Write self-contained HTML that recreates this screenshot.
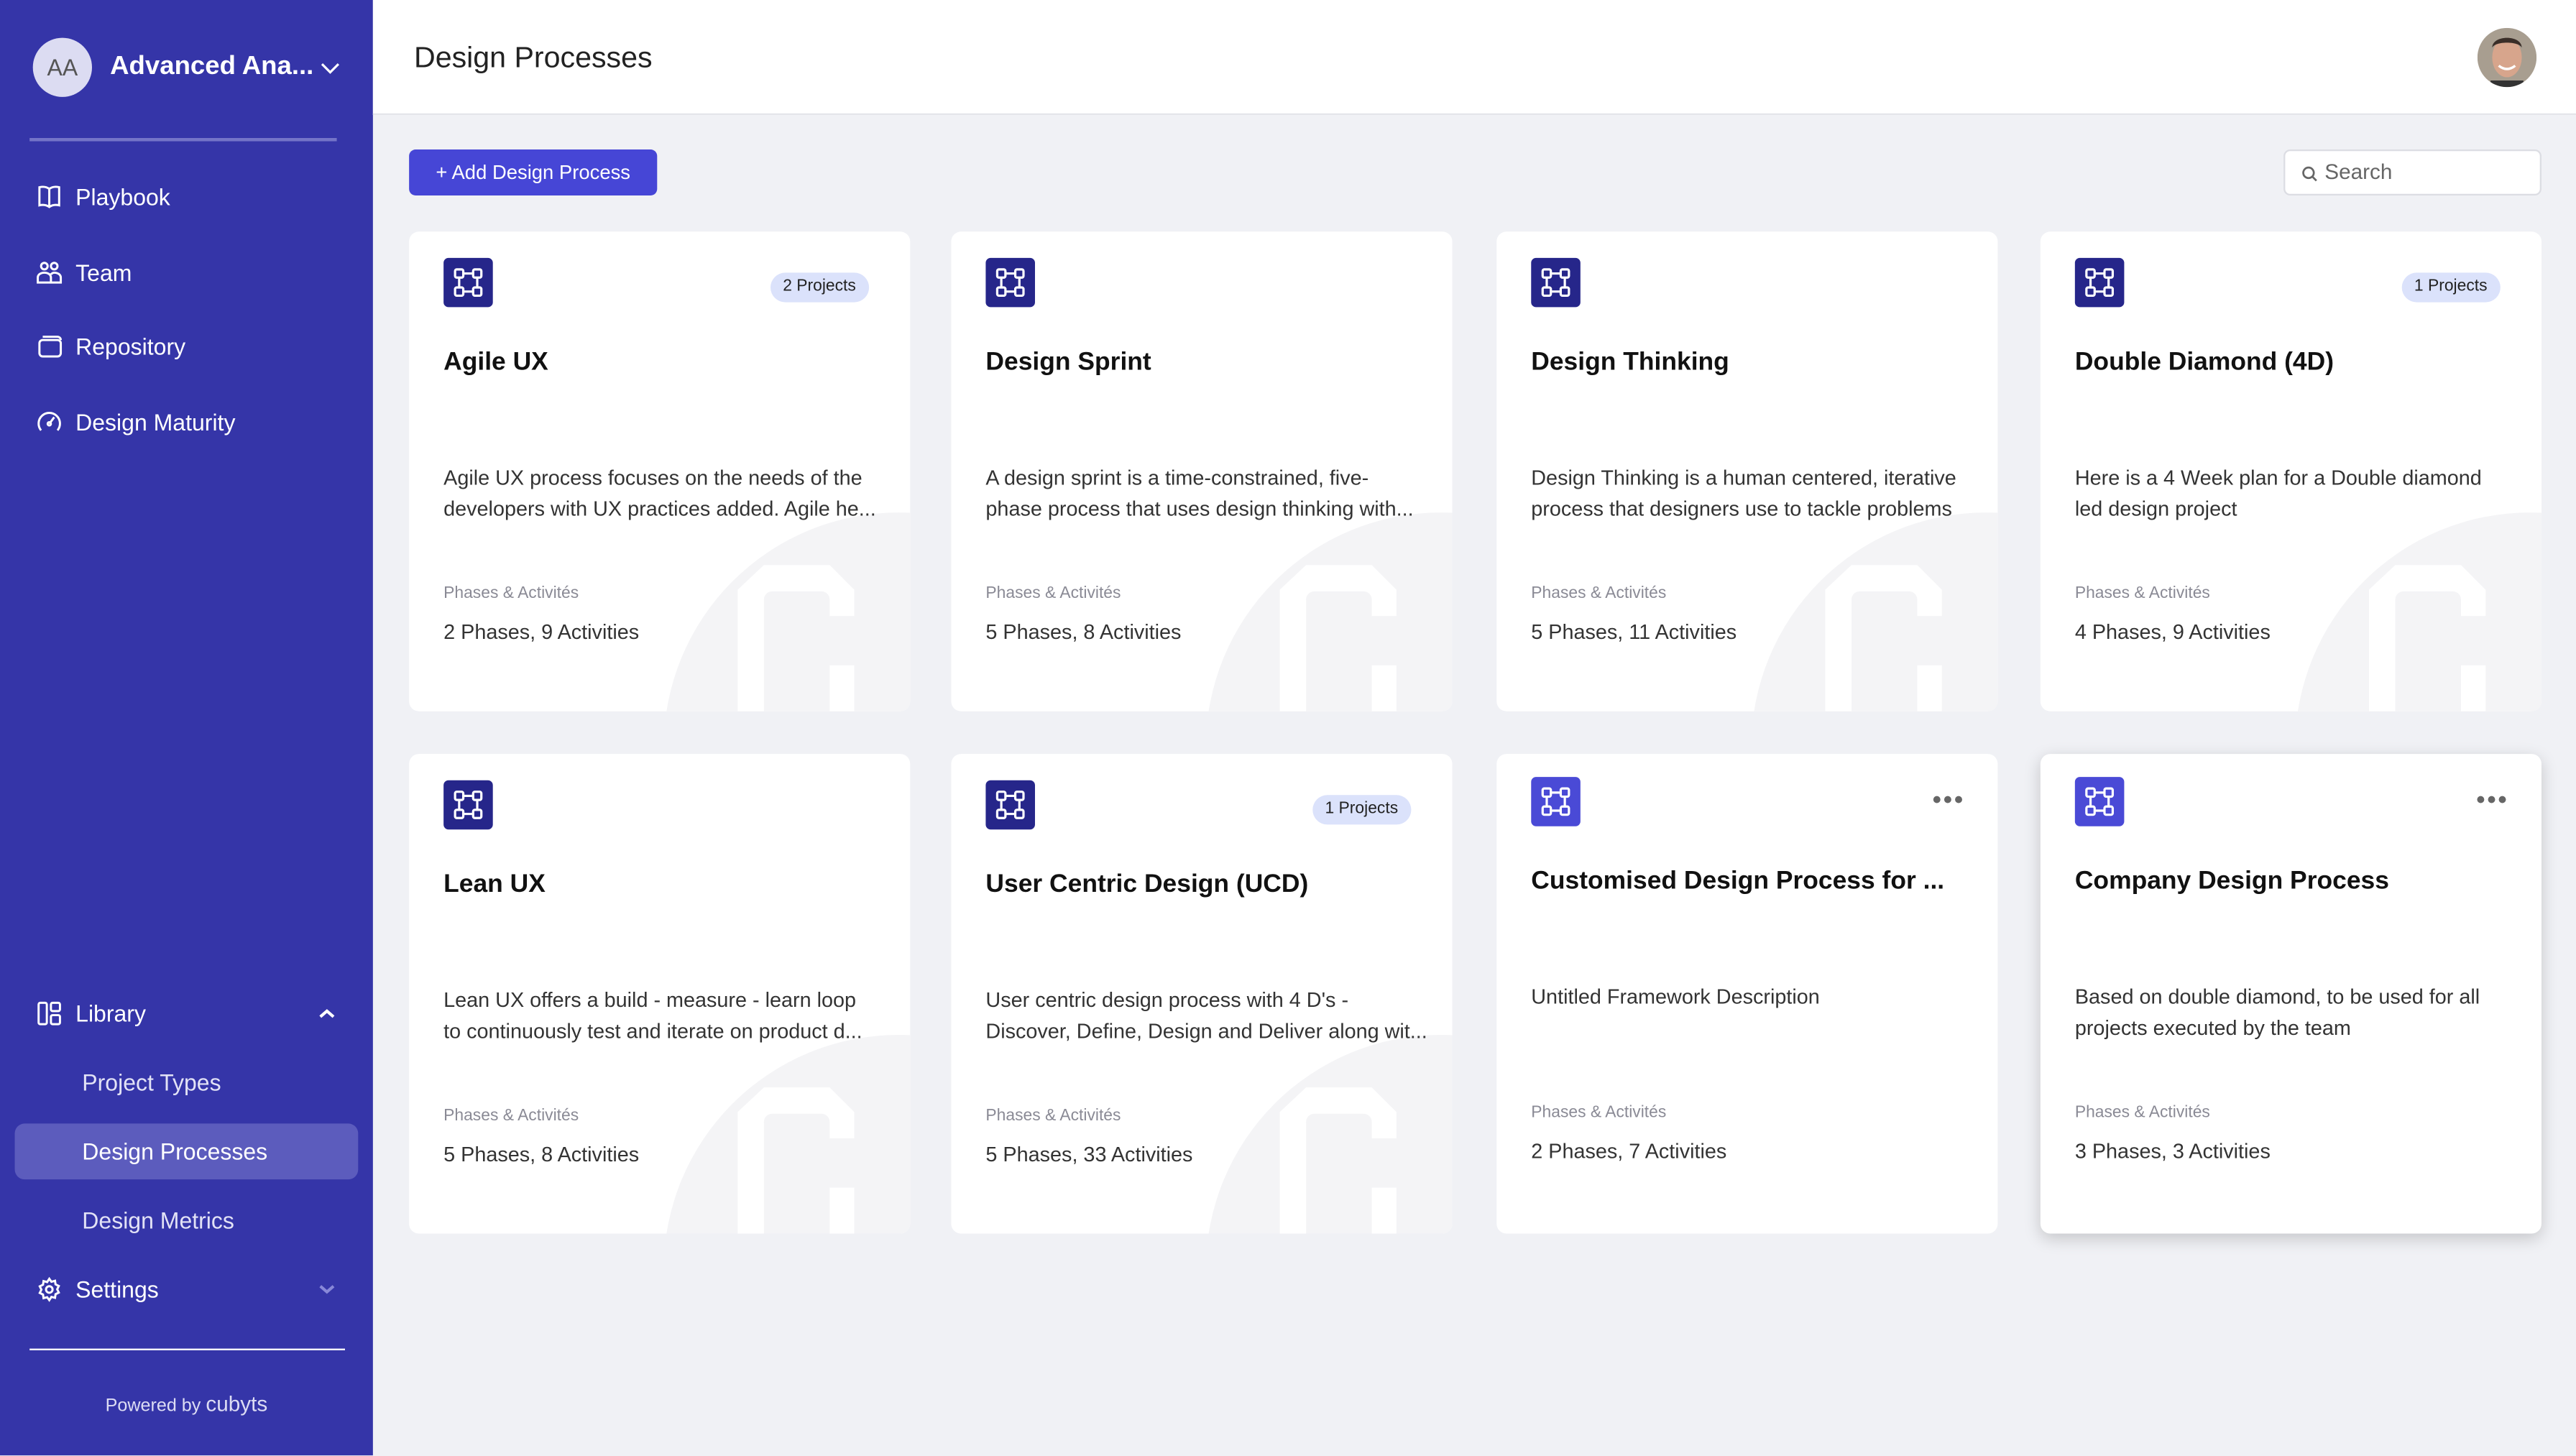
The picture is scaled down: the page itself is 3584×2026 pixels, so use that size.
<!DOCTYPE html>
<html><head><meta charset="utf-8"><style>
*{box-sizing:border-box;margin:0;padding:0}
html,body{width:3584px;height:2026px;overflow:hidden;background:#f0f1f5}
#w{width:1568px;height:886px;transform:scale(2.2857);transform-origin:0 0;position:relative;font-family:"Liberation Sans",sans-serif;background:#f0f1f5}
.sb{position:absolute;left:0;top:0;width:227px;height:886px;background:#3535a8;color:#fff}
.ab{position:absolute}
.nav{position:absolute;left:22px;font-size:14px;display:flex;align-items:center;gap:8px;color:#fff}
.nav svg{width:16px;height:16px}
.sub{position:absolute;left:50px;font-size:14px;color:#e2e2f6}
.hd{position:absolute;left:227px;top:0;right:0;height:70px;background:#fff;border-bottom:1px solid #e4e5ea}
.card{position:absolute;width:305px;height:292px;background:#fff;border-radius:6px;overflow:hidden}
.card .ic{position:absolute;left:21px;top:16px;width:30px;height:30px;border-radius:3px;background:#26268a}
.card .ic svg{position:absolute;left:5px;top:5px}
.card .bd{position:absolute;right:25px;top:25px;height:18px;padding:0 8px;border-radius:9px;background:#dbe2fb;font-size:10px;line-height:18px;color:#222}
.card h3{position:absolute;left:21px;top:71px;font-size:15.5px;font-weight:bold;color:#111;white-space:nowrap}
.card .ds{position:absolute;left:21px;top:141px;font-size:12.6px;line-height:19px;color:#333;white-space:nowrap}
.card .pl{position:absolute;left:21px;top:215px;font-size:10px;color:#8a8a95}
.card .pv{position:absolute;left:21px;top:237px;font-size:12.6px;color:#333}
.card .wm{position:absolute;left:0;top:0}
.dots{position:absolute;right:20px;top:20px;font-size:16px;color:#666;letter-spacing:1px}
</style></head><body><div id="w">
<div class="sb">
 <div class="ab" style="left:20px;top:23px;width:36px;height:36px;border-radius:50%;background:#dcdcf2;color:#555;font-size:14px;text-align:center;line-height:36px">AA</div>
 <div class="ab" style="left:67px;top:32px;font-size:16px;font-weight:bold">Advanced Ana...</div>
 <svg class="ab" style="left:195px;top:38px" width="12" height="8" viewBox="0 0 12 8"><path d="M1 1l5 5 5-5" stroke="#fff" stroke-width="1.4" fill="none"/></svg>
 <div class="ab" style="left:18px;top:84px;width:187px;height:2px;background:#7474c8"></div>
 <div class="nav" style="top:112px"><svg viewBox="0 0 16 16" fill="none" stroke="#fff" stroke-width="1.3"><path d="M8 3c-2-1.5-4-1.5-6-1v11c2-.5 4-.5 6 1 2-1.5 4-1.5 6-1V2c-2-.5-4-.5-6 1zM8 3v11"/></svg>Playbook</div>
 <div class="nav" style="top:158px"><svg viewBox="0 0 16 16" fill="none" stroke="#fff" stroke-width="1.3"><circle cx="5" cy="4" r="2"/><circle cx="11" cy="4" r="2"/><path d="M1 14v-3c0-2 2-3 4-3s4 1 4 3v3zM9 9c1-1 2-1 2-1 2 0 4 1 4 3v3H9"/></svg>Team</div>
 <div class="nav" style="top:203px"><svg viewBox="0 0 16 16" fill="none" stroke="#fff" stroke-width="1.3"><rect x="2" y="4" width="13" height="10" rx="2"/><path d="M4 2h9a2 2 0 0 1 2 2"/></svg>Repository</div>
 <div class="nav" style="top:249px"><svg viewBox="0 0 16 16" fill="none" stroke="#fff" stroke-width="1.3"><path d="M3 13a6.5 6.5 0 1 1 10 0"/><path d="M8 9l3-4"/><circle cx="8" cy="9" r="1"/></svg>Design Maturity</div>
 <div class="nav" style="top:609px"><svg viewBox="0 0 16 16" fill="none" stroke="#fff" stroke-width="1.3"><rect x="1.5" y="1.5" width="5" height="13" rx="1"/><rect x="9" y="1.5" width="5.5" height="5" rx="1"/><rect x="9" y="9" width="5.5" height="5.5" rx="1"/></svg>Library</div>
 <svg class="ab" style="left:194px;top:614px" width="10" height="7" viewBox="0 0 10 7"><path d="M1 5l4-3.5 4 3.5" stroke="#fff" stroke-width="1.8" fill="none"/></svg>
 <div class="sub" style="top:651px">Project Types</div>
 <div class="ab" style="left:9px;top:684px;width:209px;height:34px;border-radius:6px;background:#5c5cbd"></div>
 <div class="sub" style="top:693px;color:#fff">Design Processes</div>
 <div class="sub" style="top:735px">Design Metrics</div>
 <div class="nav" style="top:777px"><svg viewBox="0 0 16 16" fill="none" stroke="#fff" stroke-width="1.3"><circle cx="8" cy="8" r="2"/><path d="M8 1.5l1.3 1.8 2.2-.6.3 2.2 2 1-1 2 1 2-2 1-.3 2.2-2.2-.6L8 14.5l-1.3-1.8-2.2.6-.3-2.2-2-1 1-2-1-2 2-1 .3-2.2 2.2.6z"/></svg>Settings</div>
 <svg class="ab" style="left:194px;top:781px" width="10" height="7" viewBox="0 0 10 7"><path d="M1 2l4 3.5 4-3.5" stroke="#8888d8" stroke-width="1.8" fill="none"/></svg>
 <div class="ab" style="left:18px;top:821px;width:192px;height:1px;background:#fff"></div>
 <div class="ab" style="left:0;width:227px;top:847px;text-align:center;font-size:11px;color:#dcdcf4">Powered by <span style="font-size:13px">cubyts</span></div>
</div>
<div class="hd">
 <div class="ab" style="left:25px;top:25px;font-size:18px;color:#222">Design Processes</div>
 <svg class="ab" style="left:1281px;top:17px" width="36" height="36" viewBox="0 0 36 36"><defs><clipPath id="cp"><circle cx="18" cy="18" r="18"/></clipPath></defs><g clip-path="url(#cp)"><rect width="36" height="36" fill="#a89e90"/><ellipse cx="18" cy="18" rx="9" ry="12" fill="#d7a58c"/><path d="M9 12c0-8 18-8 18 0-2-4-16-4-18 0z" fill="#3a2e28"/><path d="M13 23q5 4 10 0" stroke="#fff" stroke-width="1.5" fill="none"/><rect x="8" y="32" width="20" height="6" fill="#333"/></g></svg>
</div>
<div class="ab" style="left:249px;top:91px;width:151px;height:28px;border-radius:4px;background:#4646d6;color:#fff;font-size:12px;line-height:28px;text-align:center">+ Add Design Process</div>
<div class="ab" style="left:1390px;top:91px;width:157px;height:28px;border-radius:4px;background:#fff;border:1px solid #dcdde3;font-size:13px;line-height:26px;color:#666;padding-left:24px">Search
<svg class="ab" style="left:10px;top:9px" width="10" height="10" viewBox="0 0 10 10"><circle cx="4.2" cy="4.2" r="3.2" stroke="#666" fill="none" stroke-width="1.2"/><path d="M6.6 6.6L9 9" stroke="#666" stroke-width="1.2"/></svg></div>
<div id="cards"></div>
</div>
<script>
var ic='<svg width="20" height="20" viewBox="0 0 20 20" fill="none" stroke="#fff" stroke-width="1.4"><rect x="2" y="2" width="5" height="5" rx="1"/><rect x="13" y="2" width="5" height="5" rx="1"/><rect x="2" y="13" width="5" height="5" rx="1"/><rect x="13" y="13" width="5" height="5" rx="1"/><path d="M7 4.5h6M7 15.5h6M4.5 7v6M15.5 7v6"/></svg>';
var wm='<svg class="wm" width="305" height="292" viewBox="0 0 305 292"><circle cx="298" cy="314" r="143" fill="#f4f4f6"/><polygon points="216,203 256,203 271,218 271,320 200,320 200,218" fill="#fff"/><rect x="216" y="219" width="40" height="110" rx="5" fill="#f4f4f6"/><rect x="255" y="234" width="20" height="30" fill="#f4f4f6"/></svg>';
var d=[
[249,141,'Agile UX','Agile UX process focuses on the needs of the<br>developers with UX practices added. Agile he...','2 Phases, 9 Activities','2 Projects',0,0],
[579,141,'Design Sprint','A design sprint is a time-constrained, five-<br>phase process that uses design thinking with...','5 Phases, 8 Activities','',0,0],
[911,141,'Design Thinking','Design Thinking is a human centered, iterative<br>process that designers use to tackle problems','5 Phases, 11 Activities','',0,0],
[1242,141,'Double Diamond (4D)','Here is a 4 Week plan for a Double diamond<br>led design project','4 Phases, 9 Activities','1 Projects',0,0],
[249,459,'Lean UX','Lean UX offers a build - measure - learn loop<br>to continuously test and iterate on product d...','5 Phases, 8 Activities','',0,0],
[579,459,'User Centric Design (UCD)','User centric design process with 4 D\'s -<br>Discover, Define, Design and Deliver along wit...','5 Phases, 33 Activities','1 Projects',0,0],
[911,459,'Customised Design Process for ...','Untitled Framework Description','2 Phases, 7 Activities','',1,0],
[1242,459,'Company Design Process','Based on double diamond, to be used for all<br>projects executed by the team','3 Phases, 3 Activities','',1,1]];
var h='';
d.forEach(function(c){
 var o=c[6]?-2:0;
 h+='<div class="card" style="left:'+c[0]+'px;top:'+c[1]+'px;'+(c[7]?'box-shadow:0 3px 10px rgba(0,0,0,.18);':'')+'">'+(c[6]?'':wm)+
 '<div class="ic" style="top:'+(16+o)+'px;'+(c[6]?'background:#4a4ad6':'')+'">'+ic+'</div>'+
 (c[5]?'<div class="bd">'+c[5]+'</div>':'')+(c[6]?'<div class="dots">•••</div>':'')+
 '<h3 style="top:'+(71+o)+'px">'+c[2]+'</h3><div class="ds" style="top:'+(141+o)+'px">'+c[3]+'</div><div class="pl" style="top:'+(215+o)+'px">Phases &amp; Activités</div><div class="pv" style="top:'+(237+o)+'px">'+c[4]+'</div></div>';
});
document.getElementById('cards').innerHTML=h;
</script>
</body></html>
